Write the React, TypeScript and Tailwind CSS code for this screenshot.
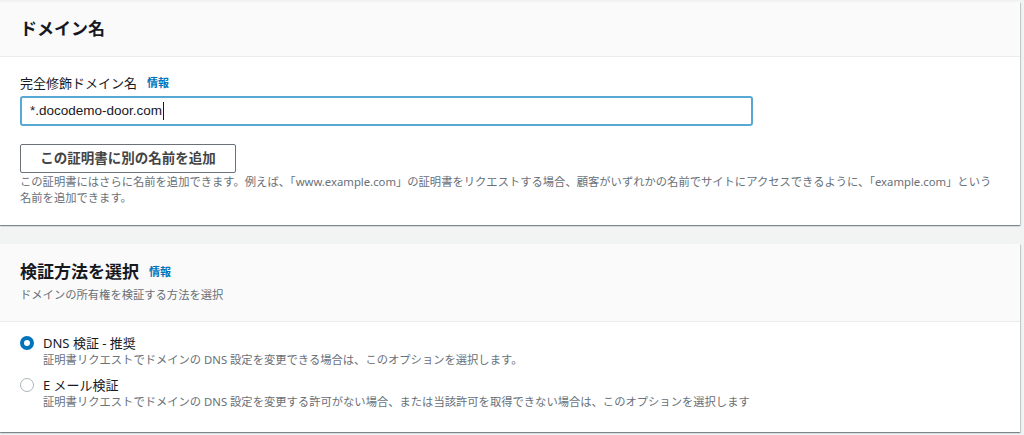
import React from 'react';

const font = { fontFamily: '"Noto Sans", "Noto Sans CJK JP", sans-serif' };

function Info() {
  return <span className="ml-[10px] text-[11px] font-bold text-[#0073bb]">情報</span>;
}

function Radio({ checked }: { checked: boolean }) {
  return checked ? (
    <span className="mt-[2px] h-[14px] w-[14px] shrink-0 rounded-full border-[4px] border-[#0073bb] bg-white" />
  ) : (
    <span className="mt-[2px] h-[14px] w-[14px] shrink-0 rounded-full border border-[#aab7b8] bg-white" />
  );
}

export default function App() {
  return (
    <div className="h-[435px] bg-[#f2f3f3] pt-[2px] text-[#16191f]" style={font}>
      <div className="w-[1020px] bg-white shadow-[0_1px_1px_0_rgba(0,28,36,0.3),1px_1px_1px_0_rgba(0,28,36,0.15),-1px_1px_1px_0_rgba(0,28,36,0.15)]">
        <div className="flex h-[55px] items-center border-b border-[#eaeded] bg-[#fafafa] px-[20px]">
          <h2 className="text-[17px] font-bold">ドメイン名</h2>
        </div>
        <div className="px-[20px] pb-[19px] pt-[16px]">
          <div className="flex items-center text-[13px] leading-[20px]">
            完全修飾ドメイン名
            <Info />
          </div>
          <div
            className="mt-[3px] flex h-[30px] w-[733px] items-center rounded-[3px] border-2 border-[#58a8d6] px-[8px] text-[13.5px]"
            style={{ fontFamily: '"Liberation Sans", "Noto Sans CJK JP", sans-serif' }}
          >
            *.docodemo-door.com<span className="ml-[1px] h-[18px] w-px bg-[#16191f]" />
          </div>
          <button className="mt-[18px] h-[29px] w-[216px] rounded-[2px] border border-[#6b7179] bg-white text-[13.5px] font-bold text-[#444]">
            この証明書に別の名前を追加
          </button>
          <p className="mt-[1px] text-[11.3px] leading-[16px] text-[#687078]">
            この証明書にはさらに名前を追加できます。例えば、「www.example.com」の証明書をリクエストする場合、顧客がいずれかの名前でサイトにアクセスできるように、「example.com」という名前を追加できます。
          </p>
        </div>
      </div>

      <div className="mt-[19px] w-[1020px] bg-white shadow-[0_1px_1px_0_rgba(0,28,36,0.3),1px_1px_1px_0_rgba(0,28,36,0.15),-1px_1px_1px_0_rgba(0,28,36,0.15)]">
        <div className="h-[78px] border-b border-[#eaeded] bg-[#fafafa] px-[20px] pt-[16px]">
          <div className="flex items-center">
            <h2 className="text-[17px] font-bold leading-[24px]">検証方法を選択</h2>
            <Info />
          </div>
          <p className="mt-[3px] text-[11.3px] leading-[16px] text-[#687078]">ドメインの所有権を検証する方法を選択</p>
        </div>
        <div className="flex flex-col gap-[8px] px-[20px] pb-[22px] pt-[12px]">
          <label className="flex gap-[9px]">
            <Radio checked />
            <span>
              <span className="block text-[13px] leading-[18px]">DNS 検証 - 推奨</span>
              <span className="block text-[11.3px] leading-[16px] text-[#687078]">
                証明書リクエストでドメインの DNS 設定を変更できる場合は、このオプションを選択します。
              </span>
            </span>
          </label>
          <label className="flex gap-[9px]">
            <Radio checked={false} />
            <span>
              <span className="block text-[13px] leading-[18px]">E メール検証</span>
              <span className="block text-[11.3px] leading-[16px] text-[#687078]">
                証明書リクエストでドメインの DNS 設定を変更する許可がない場合、または当該許可を取得できない場合は、このオプションを選択します
              </span>
            </span>
          </label>
        </div>
      </div>
    </div>
  );
}
